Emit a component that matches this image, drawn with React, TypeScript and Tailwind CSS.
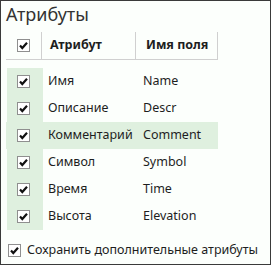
import React from "react";

function Check() {
  return (
    <span className="flex h-[13px] w-[13px] shrink-0 items-center justify-center border border-[#8f8f8f] bg-white">
      <svg width="11" height="11" viewBox="0 0 11 11">
        <path d="M2 5.5 L4.3 8 L9 2.8" fill="none" stroke="#111" strokeWidth="2.2" />
      </svg>
    </span>
  );
}

const rows = [
  ["Имя", "Name"],
  ["Описание", "Descr"],
  ["Комментарий", "Comment"],
  ["Символ", "Symbol"],
  ["Время", "Time"],
  ["Высота", "Elevation"]
];

export default function App() {
  return (
    <div
      className="flex h-[265px] w-[271px] flex-col border border-[#3a3a3a] bg-[#fcfffc] text-[12.5px] text-[#1e1e1e]"
      style={{ fontFamily: '"Noto Sans", "Open Sans", sans-serif' }}
    >
      <div className="pl-[5px] pt-[1px] text-[18px] leading-[24px] text-[#333]">Атрибуты</div>

      <div className="ml-[5px] mt-[6px] w-[212px]">
        <div className="flex h-[28px] border-b border-[#d0d0d0] font-bold">
          <div className="flex w-[36px] items-center border-r border-[#d0d0d0] pl-[11px]">
            <Check />
          </div>
          <div className="flex w-[94px] items-center border-r border-[#d0d0d0] pl-[8px]">Атрибут</div>
          <div className="flex w-[82px] items-center border-r border-[#d0d0d0] pl-[10px]">Имя поля</div>
        </div>

        <div className="mt-[8px]">
          {rows.map(([a, f], i) => (
            <div key={a} className={"flex h-[27px] " + (i === 2 ? "bg-[#dff0df]" : "")}>
              <div className="ml-[1px] flex w-[36px] items-center bg-[#dff0df] pl-[10px]">
                <Check />
              </div>
              <div className="flex w-[94px] items-center pl-[5px]">{a}</div>
              <div className="flex items-center pl-[6px]">{f}</div>
            </div>
          ))}
        </div>
      </div>

      <div className="mt-[11px] flex items-center gap-[6px] pl-[7px]">
        <Check />
        <span>Сохранить дополнительные атрибуты</span>
      </div>
    </div>
  );
}
